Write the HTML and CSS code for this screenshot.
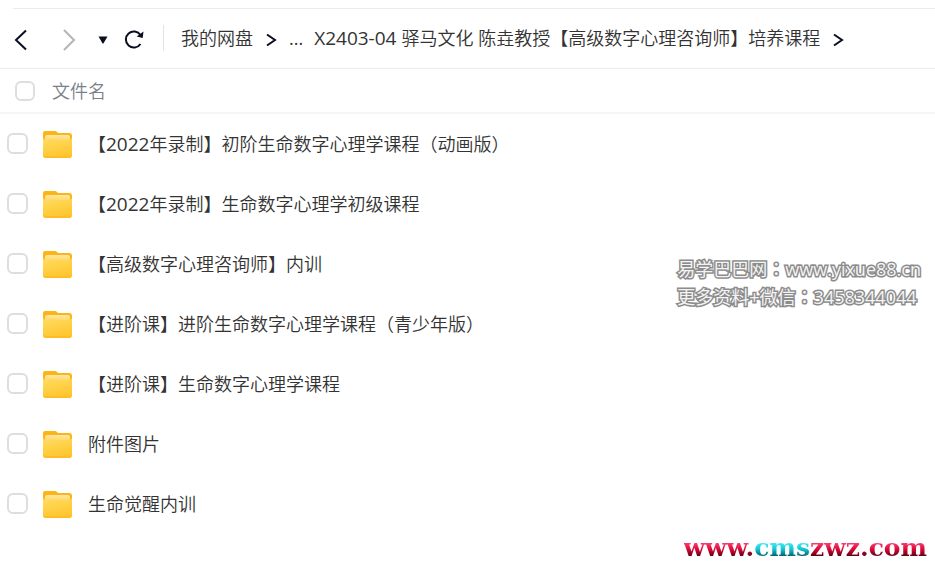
FILE: index.html
```html
<!DOCTYPE html>
<html lang="zh-CN">
<head>
    <meta charset="UTF-8">
    <meta name="viewport" content="width=device-width, initial-scale=1.0">
    <title>我的网盘</title>
    <link rel="stylesheet" href="styles.css">
</head>
<body>

<svg class="defs" width="0" height="0" aria-hidden="true">
    <defs>
        <linearGradient id="front" x1="0" y1="0" x2="0.3" y2="1">
            <stop offset="0" stop-color="#ffdc62"/>
            <stop offset="1" stop-color="#ffc62f"/>
        </linearGradient>
        <linearGradient id="paper" x1="0" y1="0" x2="0" y2="1">
            <stop offset="0" stop-color="#ffe7a6"/>
            <stop offset="1" stop-color="#ffda66"/>
        </linearGradient>
        <symbol id="folder" viewBox="0 0 30 28">
            <path fill="#fdb515" d="M3 1h10q1 0 2 1l1 1h11q3 0 3 3v10H1V3q0-2 2-2z"/>
            <path fill="url(#front)" d="M1 8h29v17q0 3-3 3H4q-3 0-3-3z"/>
            <path fill="url(#paper)" d="M3 10V7q0-2 2-2h21q2 0 2 2v3z"/>
            <path fill="#fdb515" d="M1 6h2v4q-2-1-2-4zM30 6h-2v4q2-1 2-4z"/>
            <path fill="#ffbc24" d="M1 24q0 4 3 4h23q3 0 3-4-1 2-3 2H4q-2 0-3-2z"/>
        </symbol>
    </defs>
</svg>

<div class="container">
    <nav class="toolbar">
        <button type="button" class="back" aria-label="后退">
            <svg width="16" height="22" viewBox="0 0 16 22"><path d="M13 1.500L3 11l10 9.500"/></svg>
        </button>
        <button type="button" class="forward" aria-label="前进" disabled>
            <svg width="16" height="22" viewBox="0 0 16 22"><path d="M3 1l10 10L3 21"/></svg>
        </button>
        <button type="button" class="history" aria-label="历史记录">
            <svg width="10" height="8" viewBox="0 0 10 8"><path d="M.5.500h9L5.700 7q-.7 1-1.400 0z"/></svg>
        </button>
        <button type="button" class="refresh" aria-label="刷新">
            <svg width="20" height="20" viewBox="0 0 20 20">
                <path d="M16.500 14A8 8 0 1 1 16.500 5"/>
                <path class="head" d="M19.500 1.500l-.8 6.500-6-1.500z"/>
            </svg>
        </button>
        <div class="path">
            <a href="#">我的网盘</a>
            <svg width="12" height="14" viewBox="0 0 12 14"><path d="M2 1.500l8 5.500-8 5.500"/></svg>
            <a href="#" class="more">...</a>
            <a href="#"><span class="latin">X2403-04 </span>驿马文化<span class="latin"> </span>陈垚教授【高级数字心理咨询师】培养课程</a>
            <svg width="12" height="14" viewBox="0 0 12 14"><path d="M2 1.500l8 5.500-8 5.500"/></svg>
        </div>
    </nav>

    <div class="list-head">
        <input type="checkbox" id="all">
        <label for="all">文件名</label>
    </div>

    <ul class="files">
        <li>
            <input type="checkbox" id="f1">
            <svg width="30" height="28"><use href="#folder"/></svg>
            <label for="f1">【<span class="latin">2022</span>年录制】初阶生命数字心理学课程（动画版）</label>
        </li>
        <li>
            <input type="checkbox" id="f2">
            <svg width="30" height="28"><use href="#folder"/></svg>
            <label for="f2">【<span class="latin">2022</span>年录制】生命数字心理学初级课程</label>
        </li>
        <li>
            <input type="checkbox" id="f3">
            <svg width="30" height="28"><use href="#folder"/></svg>
            <label for="f3">【高级数字心理咨询师】内训</label>
        </li>
        <li>
            <input type="checkbox" id="f4">
            <svg width="30" height="28"><use href="#folder"/></svg>
            <label for="f4">【进阶课】进阶生命数字心理学课程（青少年版）</label>
        </li>
        <li>
            <input type="checkbox" id="f5">
            <svg width="30" height="28"><use href="#folder"/></svg>
            <label for="f5">【进阶课】生命数字心理学课程</label>
        </li>
        <li>
            <input type="checkbox" id="f6">
            <svg width="30" height="28"><use href="#folder"/></svg>
            <label for="f6">附件图片</label>
        </li>
        <li>
            <input type="checkbox" id="f7">
            <svg width="30" height="28"><use href="#folder"/></svg>
            <label for="f7">生命觉醒内训</label>
        </li>
    </ul>
</div>

<div class="watermark">
    <p>易学巴巴网<span class="colon" lang="zh-TW">：</span>www.yixue88.cn</p>
    <p>更多资料+微信<span class="colon" lang="zh-TW">：</span>3458344044</p>
</div>
<div class="site"><span>www.</span><span class="blue">cms</span><span>zwz.com</span></div>

</body>
</html>
```
FILE: styles.css
```css
* {
    box-sizing: border-box;
}
body {
    margin: 0;
    background-color: #fff;
    color: #333;
    font-family: "Open Sans", "Noto Sans CJK SC", sans-serif;
    font-size: 18px;
    font-weight: 350;
    line-height: 24px;
}
.latin {
    font-size: 19px;
    font-weight: 400;
}
.defs {
    position: absolute;
}
.container {
    padding-top: 8px;
}
.toolbar {
    display: flex;
    align-items: center;
    height: 61px;
    padding-left: 13px;
    border-bottom: 1px solid #ececec;
    background: linear-gradient(#ececec, #ececec) 13px 0 / 100% 1px no-repeat;
}
button {
    display: flex;
    padding: 3px 0 0;
    border: none;
    background: none;
    cursor: pointer;
}
.toolbar svg {
    flex: none;
    fill: none;
    stroke: #090e20;
    stroke-width: 2;
}
.toolbar .forward {
    margin-left: 32px;
}
.toolbar .forward svg {
    stroke: #b5b5b5;
}
.history {
    margin-left: 21px;
}
.toolbar .history svg,
.toolbar .head {
    fill: #090e20;
    stroke: none;
}
.refresh {
    margin-left: 16px;
}
.path {
    display: flex;
    align-items: center;
    height: 26px;
    margin-left: 19px;
    padding-left: 17px;
    border-left: 1px solid #e4e4e4;
    white-space: nowrap;
}
.path a {
    color: #333;
    text-decoration: none;
}
.path svg {
    margin: 4px 12px 0;
}
.path .more {
    margin-right: 11px;
    font-weight: 400;
}
input {
    flex: none;
    appearance: none;
    width: 21px;
    height: 21px;
    margin: 0;
    border: 2px solid #dedede;
    border-radius: 6px;
    background-color: #fff;
}
input:checked {
    border-color: #06a7ff;
    background-color: #06a7ff;
}
.list-head {
    display: flex;
    align-items: center;
    gap: 17px;
    height: 45px;
    padding-left: 15px;
    border-bottom: 2px solid #f6f6f6;
    color: #7b7f89;
}
.list-head input {
    width: 20px;
    height: 20px;
}
.files {
    margin: 0;
    padding: 0;
    list-style: none;
}
.files li {
    display: flex;
    align-items: center;
    height: 60px;
    padding-left: 7px;
}
.files input {
    margin-bottom: 2px;
}
.files svg {
    margin: 0 16px 0 14px;
}
.watermark {
    position: absolute;
    top: 255px;
    right: 14px;
    color: #f4f4f4;
    font-weight: 400;
    line-height: 27px;
    -webkit-text-stroke: 3px #8c8c8c;
    paint-order: stroke fill;
}
.watermark p {
    margin: 0;
}
.colon {
    font-family: "Noto Sans CJK TC", sans-serif;
}
.site {
    position: absolute;
    right: 8px;
    bottom: 4px;
    font: bold 25px/28px "DejaVu Serif", serif;
}
.site span {
    background: linear-gradient(#ff4a78 30%, #e00a3c 55%, #5c0010 80%);
    -webkit-background-clip: text;
    background-clip: text;
    color: transparent;
}
.site .blue {
    background-image: linear-gradient(#4cf0fa 30%, #14c8d8 55%, #00606c 80%);
}
```
